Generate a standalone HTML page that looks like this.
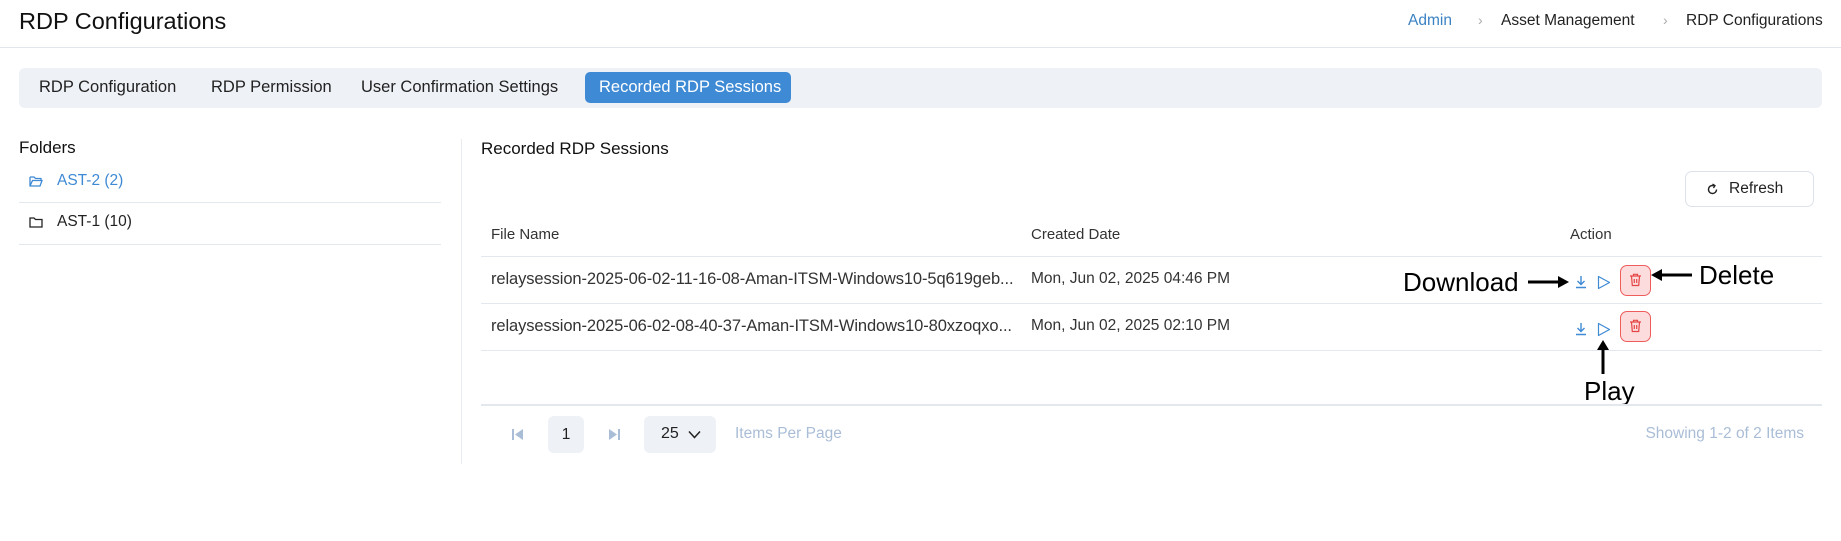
<!DOCTYPE html>
<html><head><meta charset="utf-8"><style>
*{box-sizing:border-box;margin:0;padding:0}
body{width:1841px;height:541px;background:#fff;font-family:"Liberation Sans",sans-serif;color:#222;position:relative;overflow:hidden}
.a{position:absolute;white-space:nowrap}
.line{position:absolute;height:1px;background:#e3e8ef}
.tab{position:absolute;top:72px;height:31px;line-height:31px;font-size:16.5px;color:#222}
.cell{font-size:15.5px;color:#333}
.hd{font-size:15px;color:#333}
.ann{font-size:25px;color:#000}
</style></head><body>
<div class="a" style="left:19px;top:7px;font-size:23.5px;line-height:28px;color:#111">RDP Configurations</div>
<div class="a" style="left:1408px;top:12px;font-size:15.5px;color:#3b82c4">Admin</div>
<div class="a" style="left:1478px;top:12px;font-size:14px;color:#aaa">›</div>
<div class="a" style="left:1501px;top:12px;font-size:15.5px;color:#222">Asset Management</div>
<div class="a" style="left:1663px;top:12px;font-size:14px;color:#aaa">›</div>
<div class="a" style="left:1686px;top:12px;font-size:15.5px;color:#222">RDP Configurations</div>
<div class="line" style="left:0;top:47px;width:1841px;background:#e2e5ec"></div>

<div class="a" style="left:19px;top:68px;width:1803px;height:40px;background:#eef1f6;border-radius:6px"></div>
<div class="tab" style="left:39px">RDP Configuration</div>
<div class="tab" style="left:211px">RDP Permission</div>
<div class="tab" style="left:361px">User Confirmation Settings</div>
<div class="a" style="left:585px;top:72px;width:206px;height:31px;background:#3e8ad4;border-radius:5px"></div>
<div class="tab" style="left:599px;color:#fff">Recorded RDP Sessions</div>

<div class="a" style="left:19px;top:138px;font-size:17px;color:#111">Folders</div>
<svg class="a" style="left:29px;top:175px" width="14" height="13" viewBox="0 0 14 13"><path d="M1 2h4l1.5 1.5H12v2M1 2v9h10l2-5.5H3.5L1 11" fill="none" stroke="#3e8ad4" stroke-width="1.3"/></svg>
<div class="a" style="left:57px;top:172px;font-size:15.5px;color:#3e8ad4">AST-2 (2)</div>
<div class="line" style="left:19px;top:202px;width:422px"></div>
<svg class="a" style="left:29px;top:216px" width="14" height="13" viewBox="0 0 14 13"><path d="M1 2h4l1.5 1.5H13V11H1z" fill="none" stroke="#222" stroke-width="1.3"/></svg>
<div class="a" style="left:57px;top:213px;font-size:15.5px;color:#222">AST-1 (10)</div>
<div class="line" style="left:19px;top:244px;width:422px"></div>
<div class="a" style="left:461px;top:139px;width:1px;height:325px;background:#e8ecf1"></div>

<div class="a" style="left:481px;top:139px;font-size:17px;color:#111">Recorded RDP Sessions</div>
<div class="a" style="left:1685px;top:171px;width:129px;height:36px;border:1px solid #dde2ea;border-radius:7px"></div>
<svg class="a" style="left:1706px;top:183px" width="13" height="13" viewBox="0 0 13 13"><path d="M10.5 6.5A4 4 0 1 1 8 2.8" fill="none" stroke="#222" stroke-width="1.4"/><path d="M6.5 1l2.5 1.6L7.5 5" fill="none" stroke="#222" stroke-width="1.3"/></svg>
<div class="a" style="left:1729px;top:180px;font-size:15.5px;color:#222">Refresh</div>

<div class="a hd" style="left:491px;top:226px">File Name</div>
<div class="a hd" style="left:1031px;top:226px">Created Date</div>
<div class="a hd" style="left:1570px;top:226px">Action</div>
<div class="line" style="left:481px;top:256px;width:1341px"></div>
<div class="a cell" style="left:491px;top:270px;font-size:16.5px;letter-spacing:-0.1px">relaysession-2025-06-02-11-16-08-Aman-ITSM-Windows10-5q619geb...</div>
<div class="a cell" style="left:1031px;top:270px">Mon, Jun 02, 2025 04:46 PM</div>
<div class="line" style="left:481px;top:303px;width:1341px"></div>
<div class="a cell" style="left:491px;top:317px;font-size:16.5px;letter-spacing:-0.1px">relaysession-2025-06-02-08-40-37-Aman-ITSM-Windows10-80xzoqxo...</div>
<div class="a cell" style="left:1031px;top:317px">Mon, Jun 02, 2025 02:10 PM</div>
<div class="line" style="left:481px;top:350px;width:1341px"></div>

<svg class="a" style="left:1575px;top:275px" width="12" height="14" viewBox="0 0 12 14"><path d="M6 1v8M2.5 6l3.5 3.5L9.5 6M1 12.5h10" fill="none" stroke="#3e8ad4" stroke-width="1.4"/></svg>
<svg class="a" style="left:1597px;top:275px" width="14" height="15" viewBox="0 0 14 15"><path d="M1.5 1.5l11 6-11 6z" fill="none" stroke="#3e8ad4" stroke-width="1.2" stroke-linejoin="round"/></svg>
<div class="a" style="left:1620px;top:265px;width:31px;height:31px;background:#fcdcdc;border:1px solid #ee5c5c;border-radius:7px"></div>
<svg class="a" style="left:1629px;top:273px" width="13" height="14" viewBox="0 0 13 14"><path d="M1 3h11M4.5 3V1.3h4V3M2.5 3l.8 9.5h6.4l.8-9.5M5.3 6v4M7.7 6v4" fill="none" stroke="#e54545" stroke-width="1.2"/></svg>

<svg class="a" style="left:1575px;top:322px" width="12" height="14" viewBox="0 0 12 14"><path d="M6 1v8M2.5 6l3.5 3.5L9.5 6M1 12.5h10" fill="none" stroke="#3e8ad4" stroke-width="1.4"/></svg>
<svg class="a" style="left:1597px;top:322px" width="14" height="15" viewBox="0 0 14 15"><path d="M1.5 1.5l11 6-11 6z" fill="none" stroke="#3e8ad4" stroke-width="1.2" stroke-linejoin="round"/></svg>
<div class="a" style="left:1620px;top:311px;width:31px;height:31px;background:#fcdcdc;border:1px solid #ee5c5c;border-radius:7px"></div>
<svg class="a" style="left:1629px;top:319px" width="13" height="14" viewBox="0 0 13 14"><path d="M1 3h11M4.5 3V1.3h4V3M2.5 3l.8 9.5h6.4l.8-9.5M5.3 6v4M7.7 6v4" fill="none" stroke="#e54545" stroke-width="1.2"/></svg>

<div class="a ann" style="left:1403px;top:267px;font-size:26px">Download</div>
<svg class="a" style="left:1528px;top:276px" width="42" height="12" viewBox="0 0 42 12"><path d="M0 6h32" stroke="#000" stroke-width="3"/><path d="M30 0l11 6-11 6z" fill="#000"/></svg>
<div class="a ann" style="left:1699px;top:260px;font-size:26px">Delete</div>
<svg class="a" style="left:1651px;top:269px" width="41" height="12" viewBox="0 0 41 12"><path d="M9 6h32" stroke="#000" stroke-width="3"/><path d="M11 0L0 6l11 6z" fill="#000"/></svg>
<svg class="a" style="left:1597px;top:340px" width="12" height="34" viewBox="0 0 12 34"><path d="M6 8v26" stroke="#000" stroke-width="3"/><path d="M0 10L6 0l6 10z" fill="#000"/></svg>
<div class="a ann" style="left:1584px;top:376px;font-size:26px">Play</div>

<div class="a" style="left:481px;top:404px;width:1341px;height:2px;background:#e3e8ef"></div>
<svg class="a" style="left:512px;top:429px" width="11" height="11" viewBox="0 0 11 11"><rect x="0" y="0" width="2" height="11" fill="#a9bdd6"/><path d="M11 0v11L3 5.5z" fill="#a9bdd6"/></svg>
<div class="a" style="left:548px;top:416px;width:36px;height:37px;background:#eef1f6;border-radius:6px;text-align:center;line-height:37px;font-size:15.5px;color:#222">1</div>
<svg class="a" style="left:609px;top:429px" width="11" height="11" viewBox="0 0 11 11"><path d="M0 0v11l8-5.5z" fill="#a9bdd6"/><rect x="9" y="0" width="2" height="11" fill="#a9bdd6"/></svg>
<div class="a" style="left:644px;top:416px;width:72px;height:37px;background:#eef1f6;border-radius:6px"></div>
<div class="a" style="left:661px;top:425px;font-size:16px;color:#222">25</div>
<svg class="a" style="left:688px;top:430px" width="13" height="9" viewBox="0 0 13 9"><path d="M1 1.5l5.5 6 5.5-6" fill="none" stroke="#222" stroke-width="1.5"/></svg>
<div class="a" style="left:735px;top:425px;font-size:15.5px;color:#a9bdd6">Items Per Page</div>
<div class="a" style="left:1604px;top:425px;width:200px;text-align:right;font-size:15.5px;color:#a9bdd6">Showing 1-2 of 2 Items</div>
</body></html>
